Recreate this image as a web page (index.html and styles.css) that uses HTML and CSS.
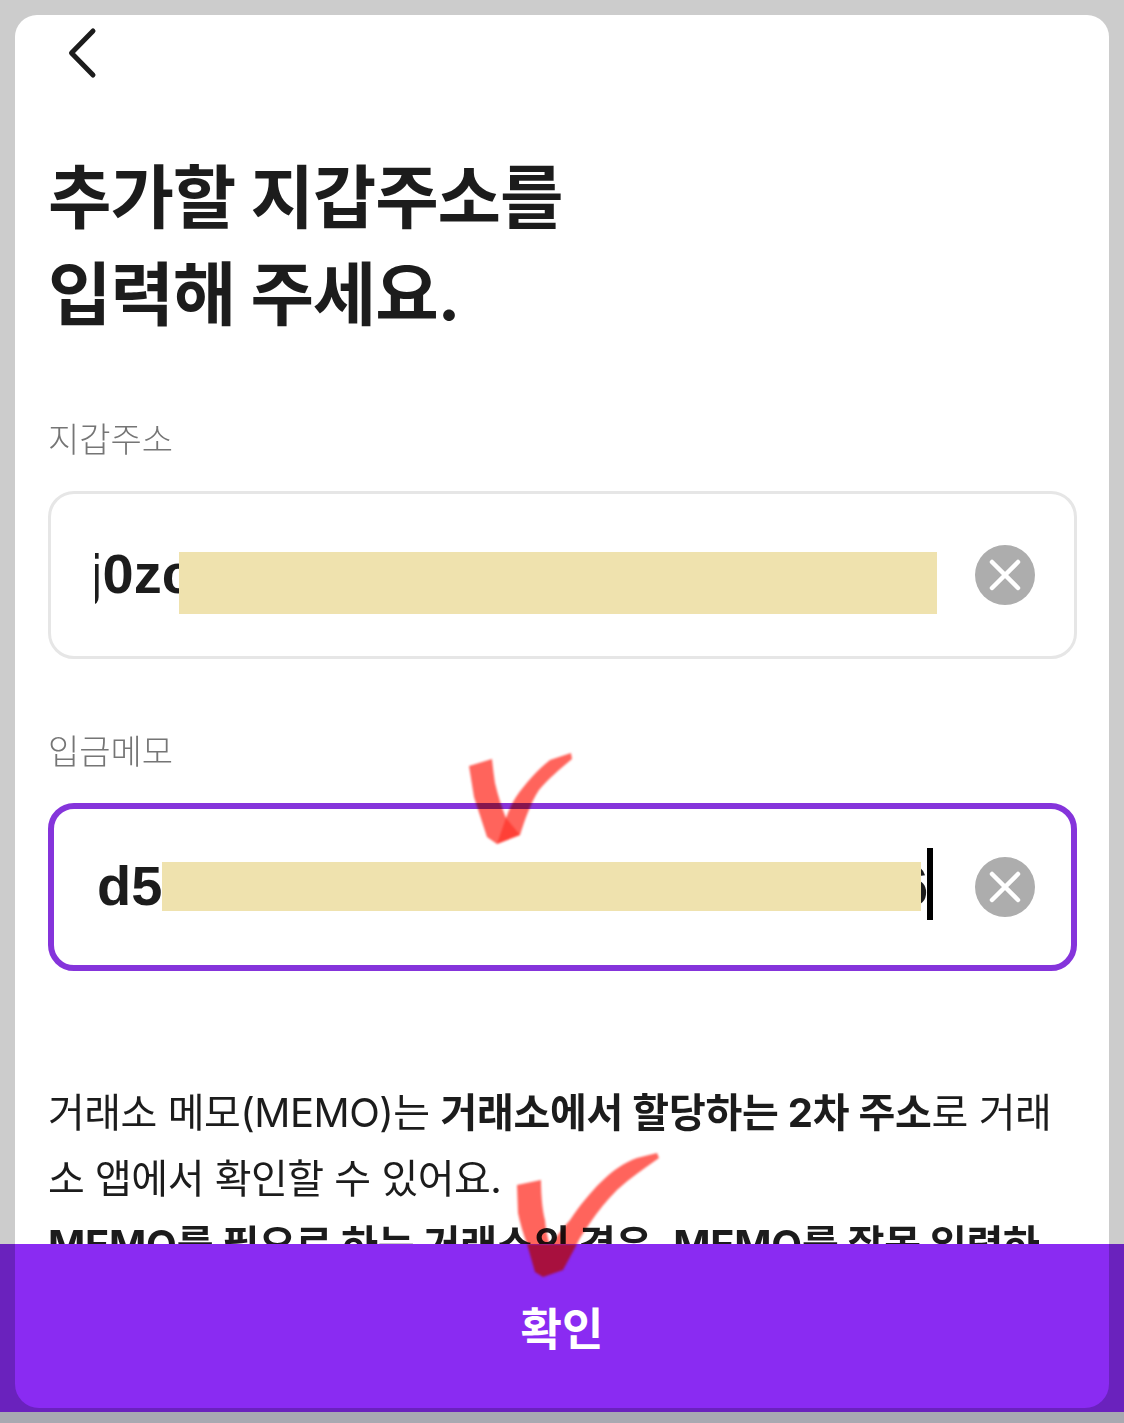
FILE: index.html
```html
<!DOCTYPE html>
<html lang="ko">
<head>
  <meta charset="UTF-8" />
  <title>지갑주소 추가</title>
  <link rel="stylesheet" href="styles.css">
</head>
<body>
  <main class="sheet">
    <button class="back-btn" aria-label="뒤로">
      <svg width="32" height="54" viewBox="0 0 32 54">
        <path d="M28 5 L6.500 27 L28 49" fill="none" stroke="#1c1c1c" stroke-width="5" stroke-linecap="round" stroke-linejoin="round"/>
      </svg>
    </button>

    <h1 class="title">추가할 지갑주소를<br>입력해 주세요.</h1>

    <section class="field">
      <label class="field-label">지갑주소</label>
      <div class="input-box">
        <span class="input-clip"><span class="input-text input-text-first">j0zc</span></span>
        <span class="mask mask-first"></span>
        <span class="clear-btn">
          <svg width="60" height="60" viewBox="0 0 60 60">
            <circle cx="30" cy="30" r="30" fill="#adadad"/>
            <path d="M17 17 L43 43 M43 17 L17 43" stroke="#fff" stroke-width="4.500" stroke-linecap="round"/>
          </svg>
        </span>
      </div>
    </section>

    <section class="field field-memo">
      <label class="field-label">입금메모</label>
      <div class="input-box input-box-focus">
        <span class="input-text">d5</span>
        <span class="input-text input-tail">6</span>
        <span class="mask mask-second"></span>
        <span class="caret"></span>
        <span class="clear-btn">
          <svg width="60" height="60" viewBox="0 0 60 60">
            <circle cx="30" cy="30" r="30" fill="#adadad"/>
            <path d="M17 17 L43 43 M43 17 L17 43" stroke="#fff" stroke-width="4.500" stroke-linecap="round"/>
          </svg>
        </span>
      </div>
    </section>

    <div class="notice">
      <p>거래소 메모(MEMO)는 <strong>거래소에서 할당하는 2차 주소</strong>로 거래소 앱에서 확인할 수 있어요.</p>
      <p><strong>MEMO를 필요로 하는 거래소의 경우, MEMO를 잘못 입력하</strong></p>
    </div>
  </main>

  <!-- 손으로 그린 체크 표시 -->
  <svg class="check check-top" width="110" height="96" viewBox="0 0 110 96">
    <path d="M1 14 L24 7 C25 17 26 24 27 31 C30 44 34 56 38 66 C41 58 44 51 48 45 C57 32 69 18 82 8 L103 1 L104 7 C92 17 80 27 71 38 C62 52 57 68 52 83 L29 92 L19 85 L6 45 Z" fill="#ff4238" fill-opacity="0.82"/>
    <path d="M38 66 L52 83 L29 92 Z" fill="#ff2a20" fill-opacity="0.6"/>
  </svg>
  <svg class="check check-bottom" width="146" height="126" viewBox="0 0 146 126">
    <path d="M2 32 L26 27 C26 45 28 60 30 67 C31 78 33 86 35 93 C40 85 47 76 55 67 C65 52 75 40 85 30 C97 18 110 9 122 5 L142 0 L144 5 C130 15 115 25 102 37 C92 47 83 58 75 70 C68 80 65 85 62 91 L48 117 L28 124 L20 119 L12 91 C8 80 5 70 3 60 Z" fill="#ff4238" fill-opacity="0.82"/>
  </svg>

  <footer class="confirm-bar">
    <button class="confirm-btn">확인</button>
    <svg class="check-on-bar" width="146" height="126" viewBox="0 0 146 126">
      <path d="M12 91 L62 91 L48 117 L28 124 L20 119 Z" fill="#a8103e"/>
    </svg>
  </footer>
  <div class="bottom-strip"></div>
</body>
</html>
```

FILE: styles.css
```css
:root {
  --purple: #8a2bf2;
  --purple-dim: #6a22bd;
  --ink: #1c1c1c;
  --grey-text: #757575;
  --mask: #efe2ae;
}

* {
  margin: 0;
  padding: 0;
  box-sizing: border-box;
}

html, body {
  height: 1423px;
  overflow: hidden;
}

body {
  position: relative;
  background-color: #cccccc;
  color: var(--ink);
  font-family: 'Inter', 'Liberation Sans', 'Noto Sans CJK KR', sans-serif;
}

.sheet {
  height: 1408px;
  margin: 15px 15px 0;
  padding: 0 32px 0 33px;
  background-color: #fff;
  border-radius: 22px 22px 0 0;
  overflow: hidden;
}

.back-btn {
  display: flex;
  align-items: flex-start;
  height: 135px;
  padding: 11px 0 0 17px;
  border: none;
  background: none;
}

.back-btn svg {
  display: block;
}

.title {
  height: 194px;
  font-size: 69px;
  line-height: 97px;
  font-weight: 700;
  letter-spacing: -1.1px;
}

.field {
  margin-top: 79px;
}

.field-memo {
  margin-top: 76px;
}

.field-label {
  display: block;
  height: 36px;
  font-size: 34px;
  line-height: 34px;
  color: var(--grey-text);
  font-weight: 300;
}

.input-box {
  display: flex;
  align-items: center;
  position: relative;
  height: 168px;
  margin-top: 32px;
  padding-left: 44px;
  border: 3px solid #e6e6e6;
  border-radius: 26px;
}

.input-box-focus {
  padding-left: 43px;
  border: 6px solid #8534db;
}

.input-clip {
  display: block;
  width: 90px;
  margin-top: -4px;
  overflow: hidden;
}

.input-text {
  margin-top: -4px;
  font-family: 'Liberation Sans', sans-serif;
  font-size: 56px;
  font-weight: 700;
}

.input-text-first {
  display: block;
  margin-top: 0;
  margin-left: -8px;
  white-space: nowrap;
}

.input-tail {
  position: absolute;
  left: 843px;
  top: 48px;
}

.mask {
  position: absolute;
  background-color: var(--mask);
}

.mask-first {
  left: 128px;
  top: 58px;
  width: 758px;
  height: 62px;
}

.mask-second {
  left: 108px;
  top: 53px;
  width: 759px;
  height: 49px;
}

.caret {
  position: absolute;
  left: 873px;
  top: 39px;
  width: 6px;
  height: 72px;
  background-color: #000;
}

.clear-btn {
  position: absolute;
  right: 39px;
  top: 51px;
  height: 60px;
}

.clear-btn svg {
  display: block;
}

.input-box-focus .clear-btn {
  right: 36px;
  top: 48px;
}

.notice {
  margin-top: 109px;
  font-size: 40px;
  line-height: 66px;
  font-weight: 400;
  letter-spacing: -0.5px;
}

.notice strong {
  font-weight: 700;
  letter-spacing: -0.25px;
}

.confirm-bar {
  position: absolute;
  left: 0;
  right: 0;
  top: 1244px;
  height: 168px;
  padding: 0 15px 4px;
  overflow: hidden;
  background-color: var(--purple-dim);
}

.confirm-btn {
  display: block;
  width: 100%;
  height: 100%;
  border: none;
  border-radius: 0 0 24px 24px;
  background-color: var(--purple);
  color: #fff;
  font-family: inherit;
  font-size: 45px;
  font-weight: 700;
}

.bottom-strip {
  position: absolute;
  left: 0;
  right: 0;
  top: 1412px;
  height: 11px;
  background-color: #a8a9b1;
}

.check {
  position: absolute;
  mix-blend-mode: multiply;
  filter: blur(0.8px);
}

.check-top {
  left: 468px;
  top: 752px;
}

.check-bottom {
  left: 515px;
  top: 1153px;
}

.check-on-bar {
  position: absolute;
  left: 515px;
  top: -91px;
  filter: blur(0.8px);
}
```
